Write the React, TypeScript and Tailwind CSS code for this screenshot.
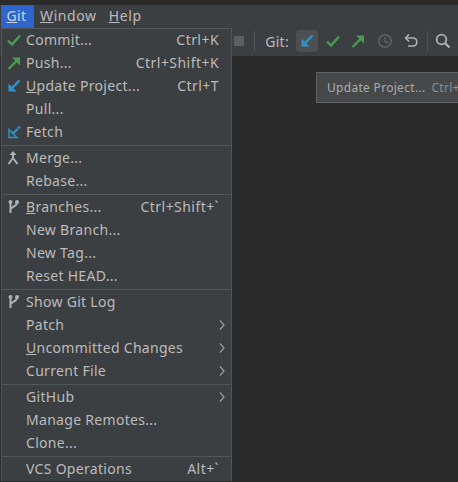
import { ReactNode } from "react";

const GREEN = "#499c54";
const BLUE = "#3592c4";
const GRAY = "#afb1b3";

function CheckIcon({ className = "" }: { className?: string }) {
  return (
    <svg width="16" height="16" viewBox="0 0 16 16" className={className}>
      <path d="M2 8.5 L6 12.5 L14 3.5" fill="none" stroke={GREEN} strokeWidth="2.4" />
    </svg>
  );
}

function PushIcon() {
  return (
    <svg width="16" height="16" viewBox="0 0 16 16">
      <path d="M2.5 14 L12 4.5" fill="none" stroke={GREEN} strokeWidth="2.4" />
      <path d="M6 2.5 H14 V10.5 Z" fill={GREEN} />
    </svg>
  );
}

function UpdateIcon() {
  return (
    <svg width="16" height="16" viewBox="0 0 16 16">
      <path d="M13.5 2.5 L4.5 11.5" fill="none" stroke={BLUE} strokeWidth="2.4" />
      <path d="M2.5 5.5 V13.5 H10.5 Z" fill={BLUE} />
    </svg>
  );
}

function FetchIcon() {
  return (
    <svg width="16" height="16" viewBox="0 0 16 16">
      <path d="M3 5.5 V13.5 H11 Z" fill="none" stroke={BLUE} strokeWidth="1.4" />
      <path d="M6 10 L8 8 M8 8.5 L10 6.5 M10 6.5 L11.5 5 M12 4.5 L14 2.5" fill="none" stroke={BLUE} strokeWidth="2.2" />
    </svg>
  );
}

function MergeIcon() {
  return (
    <svg width="16" height="16" viewBox="0 0 16 16">
      <path d="M7 4 V8 L2.5 14 M7 8 L11.5 14" fill="none" stroke={GRAY} strokeWidth="2" />
      <path d="M7 1 L10.5 5 H3.5 Z" fill={GRAY} />
    </svg>
  );
}

function BranchIcon() {
  return (
    <svg width="16" height="16" viewBox="0 0 16 16">
      <path d="M4.5 3 V14 M11 3.5 C11 8 5.5 7 4.5 10.5" fill="none" stroke={GRAY} strokeWidth="2" />
      <circle cx="4.5" cy="3" r="2" fill={GRAY} />
      <circle cx="11" cy="3" r="2" fill={GRAY} />
    </svg>
  );
}

function Arrow() {
  return (
    <svg width="6" height="10" viewBox="0 0 6 10">
      <path d="M1 0.5 L5 5 L1 9.5" fill="none" stroke="#9a9c9e" strokeWidth="1.2" />
    </svg>
  );
}

type Row = { label: ReactNode; icon?: ReactNode; keys?: string; more?: boolean };

const GROUPS: Row[][] = [
  [
    { label: <>Comm<u>i</u>t...</>, icon: <CheckIcon />, keys: "Ctrl+K" },
    { label: "Push...", icon: <PushIcon />, keys: "Ctrl+Shift+K" },
    { label: <><u>U</u>pdate Project...</>, icon: <UpdateIcon />, keys: "Ctrl+T" },
    { label: "Pull..." },
    { label: "Fetch", icon: <FetchIcon /> },
  ],
  [
    { label: "Merge...", icon: <MergeIcon /> },
    { label: "Rebase..." },
  ],
  [
    { label: <><u>B</u>ranches...</>, icon: <BranchIcon />, keys: "Ctrl+Shift+`" },
    { label: "New Branch..." },
    { label: "New Tag..." },
    { label: "Reset HEAD..." },
  ],
  [
    { label: "Show Git Log", icon: <BranchIcon /> },
    { label: "Patch", more: true },
    { label: <><u>U</u>ncommitted Changes</>, more: true },
    { label: "Current File", more: true },
  ],
  [
    { label: "GitHub", more: true },
    { label: "Manage Remotes..." },
    { label: "Clone..." },
  ],
  [{ label: "VCS Operations", keys: "Alt+`" }],
];

function MenuRow({ row }: { row: Row }) {
  return (
    <div className="flex h-[23px] items-center pb-[2px] pr-[12px]">
      <div className="flex w-[24px] shrink-0 justify-center">{row.icon}</div>
      <div className="flex-1 whitespace-nowrap">{row.label}</div>
      {row.keys && <div className="whitespace-nowrap tracking-[0.45px]">{row.keys}</div>}
      {row.more && <div className="mr-[-6px]"><Arrow /></div>}
    </div>
  );
}

function Toolbar() {
  return (
    <div className="flex h-[28px] items-center justify-end bg-[#3c3f41] pb-[2px] pr-[7px]">
      <div className="h-[10px] w-[10px] bg-[#5c5e60]" />
      <div className="ml-[10px] h-[20px] w-px bg-[#515658]" />
      <span className="ml-[10px]">Git:</span>
      <div className="ml-[7px] flex h-[22px] w-[22px] items-center justify-center rounded-[3px] bg-[#4c5052]">
        <UpdateIcon />
      </div>
      <div className="ml-[7px] flex w-[16px] justify-center"><CheckIcon /></div>
      <div className="ml-[9px] flex w-[16px] justify-center"><PushIcon /></div>
      <svg width="16" height="16" viewBox="0 0 16 16" className="ml-[11px]">
        <circle cx="8" cy="8" r="6.2" fill="none" stroke="#5f6163" strokeWidth="1.6" />
        <path d="M8 4 V8.5 L11 10" fill="none" stroke="#5f6163" strokeWidth="1.4" />
      </svg>
      <svg width="16" height="16" viewBox="0 0 16 16" className="ml-[10px]">
        <path d="M3.5 5 H10 C15 5 15 13 10 13 H5" fill="none" stroke={GRAY} strokeWidth="1.6" />
        <path d="M6 1.5 L2.5 5 L6 8.5" fill="none" stroke={GRAY} strokeWidth="1.6" />
      </svg>
      <div className="ml-[8px] h-[20px] w-px bg-[#515658]" />
      <svg width="16" height="16" viewBox="0 0 16 16" className="ml-[7px]">
        <circle cx="6.5" cy="6.5" r="4.8" fill="none" stroke={GRAY} strokeWidth="1.8" />
        <path d="M10 10 L14.5 14.5" fill="none" stroke={GRAY} strokeWidth="2.2" />
      </svg>
    </div>
  );
}

export default function App() {
  return (
    <div
      className="relative flex h-[482px] w-[458px] flex-col overflow-hidden bg-[#2b2b2b] text-[14px] tracking-[0.3px] text-[#bbbbbb]"
      style={{ fontFamily: '"Noto Sans", sans-serif' }}
    >
      <div className="h-[5px] bg-[#2b2b2b]" />
      <div className="flex h-[23px] items-center bg-[#3c3f41] pb-[2px] pl-[1px]">
        <div className="-mb-[2px] flex h-[23px] w-[33px] items-center justify-center bg-[#2f65ca] pb-[2px] pr-[2px] text-[#c9d4ea]"><span><u>G</u>it</span></div>
        <div className="ml-[6px] tracking-[0.6px]"><u>W</u>indow</div>
        <div className="ml-[12px] tracking-[0.6px]"><u>H</u>elp</div>
      </div>
      <Toolbar />
      <div className="flex-1 bg-[#2b2b2b]" />

      {/* dropdown */}
      <div className="absolute left-[1px] top-[28px] w-[231px] border border-b-0 border-[#515658] bg-[#3c3f41]">
        {GROUPS.map((group, i) => (
          <div key={i}>
            {i > 0 && <div className="my-[1px] h-px bg-[#515658]" />}
            {group.map((row, j) => <MenuRow key={j} row={row} />)}
          </div>
        ))}
      </div>

      {/* tooltip, runs past the window edge in the reference too */}
      <div className="absolute left-[316px] top-[72px] flex h-[31px] w-[142px] items-center overflow-hidden whitespace-nowrap border border-r-0 border-[#5f6163] bg-[#46484a] pl-[10px] text-[12px] text-[#a9abad]">
        <span>Update Project...</span>
        <span className="ml-[6px] text-[#8c8e90]">Ctrl+</span>
      </div>
    </div>
  );
}
